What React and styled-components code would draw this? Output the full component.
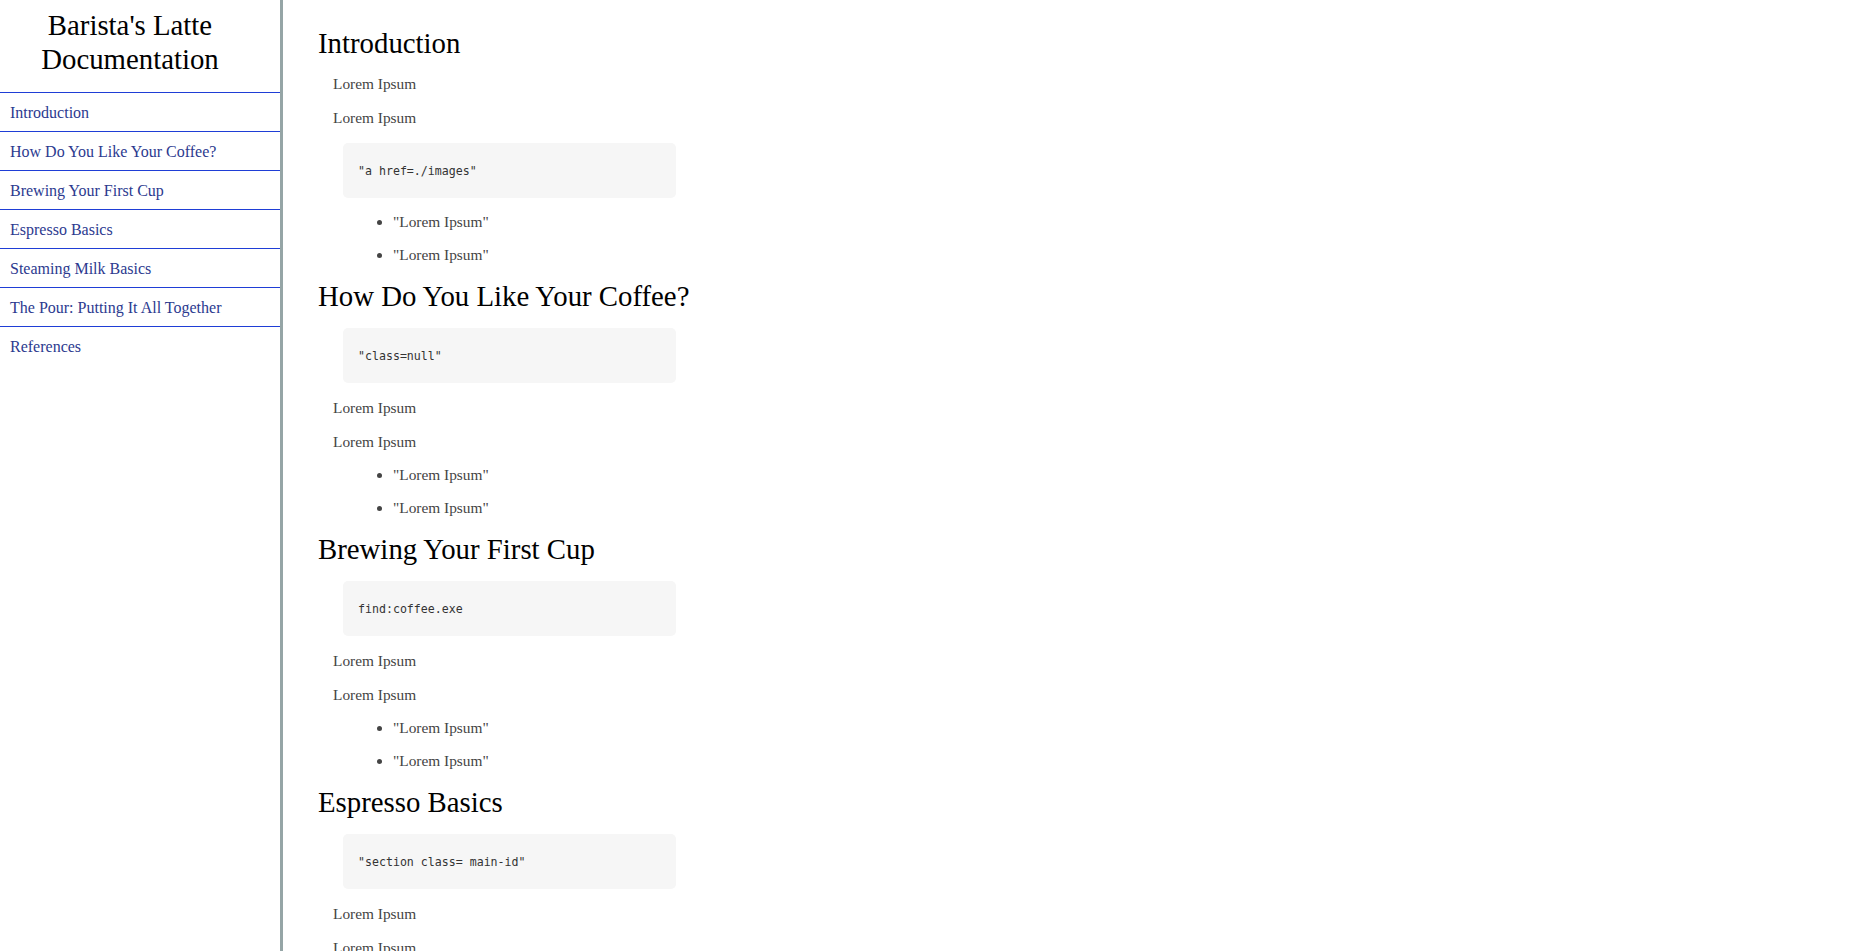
import React from "react";
import styled, { createGlobalStyle } from "styled-components";

const sections = [
    {
        id: "introduction",
        title: "Introduction",
        order: ["p", "p", "code", "list"],
        code: '"a href=./images"',
    },
    {
        id: "how_do_you_like_your_coffee",
        title: "How Do You Like Your Coffee?",
        order: ["code", "p", "p", "list"],
        code: '"class=null"',
    },
    {
        id: "brewing_your_first_cup",
        title: "Brewing Your First Cup",
        order: ["code", "p", "p", "list"],
        code: "find:coffee.exe",
    },
    {
        id: "espresso_basics",
        title: "Espresso Basics",
        order: ["code", "p", "p", "list"],
        code: '"section class= main-id"',
    },
    {
        id: "steaming_milk_basics",
        title: "Steaming Milk Basics",
        order: ["code", "p", "p", "list"],
        code: '"nav id=navbar"',
    },
    {
        id: "the_pour",
        title: "The Pour: Putting It All Together",
        order: ["code", "p", "p", "list"],
        code: '"header"',
    },
    {
        id: "references",
        title: "References",
        order: ["code", "p", "p", "list"],
        code: '"footer"',
    },
];

export default function App() {
    const renderBlock = (kind, section, i) => {
        if (kind === "p") return <Text key={i}>Lorem Ipsum</Text>;
        if (kind === "code")
            return (
                <Code key={i}>
                    <code>{section.code}</code>
                </Code>
            );
        return (
            <List key={i}>
                <li>"Lorem Ipsum"</li>
                <li>"Lorem Ipsum"</li>
            </List>
        );
    };

    return (
        <>
            <GlobalStyle />
            <Page>
                <Navbar id="navbar">
                    <Header>Barista's Latte Documentation</Header>
                    <NavList>
                        {sections.map((s) => (
                            <NavItem key={s.id}>
                                <NavLink href={`#${s.id}`}>{s.title}</NavLink>
                            </NavItem>
                        ))}
                    </NavList>
                </Navbar>
                <Main id="main-doc">
                    {sections.map((s) => (
                        <Section key={s.id} id={s.id}>
                            <SectionTitle>{s.title}</SectionTitle>
                            {s.order.map((kind, i) => renderBlock(kind, s, i))}
                        </Section>
                    ))}
                </Main>
            </Page>
        </>
    );
}

const GlobalStyle = createGlobalStyle`
    * {
        box-sizing: border-box;
    }
    body {
        margin: 0;
        background: #fff;
        font-family: "Liberation Serif", "Times New Roman", serif;
        font-size: 16px;
    }
`;

const Page = styled.div`
    display: flex;
    align-items: flex-start;
`;

const Navbar = styled.nav`
    position: sticky;
    top: 0;
    flex: 0 0 283px;
    height: 100vh;
    border-right: 3px solid #95a5a6;
`;

const Header = styled.header`
    padding: 8px 20px 16px 0;
    text-align: center;
    font-size: 28.8px;
    line-height: 34px;
    color: #000;
`;

const NavList = styled.ul`
    list-style: none;
    margin: 0;
    padding: 0;
`;

const NavItem = styled.li`
    border-top: 1px solid #1f3ed6;
    padding: 11px 10px 9px;
    line-height: 18px;
`;

const NavLink = styled.a`
    color: #2c3a8f;
    text-decoration: none;
    font-size: 16px;
`;

const Main = styled.main`
    flex: 1;
    display: flex;
    flex-direction: column;
    gap: 16px;
    padding: 27px 35px 40px;
`;

const Section = styled.section`
    display: flex;
    flex-direction: column;
    gap: 16px;
`;

const SectionTitle = styled.header`
    font-size: 28.8px;
    line-height: 32px;
    color: #000;
`;

const Text = styled.p`
    margin: 0 0 0 15px;
    font-size: 15.36px;
    line-height: 18px;
    color: #444;
`;

const Code = styled.pre`
    margin: 0 0 0 25px;
    width: 333px;
    padding: 20.5px 15px;
    background: #f6f6f6;
    border-radius: 5px;
    font-family: "DejaVu Sans Mono", "Liberation Mono", monospace;
    font-size: 11.6px;
    line-height: 14px;
    color: #333;
`;

const List = styled.ul`
    display: flex;
    flex-direction: column;
    gap: 15px;
    margin: -1px 0 0;
    padding-left: 75px;
    font-size: 15.36px;
    line-height: 18px;
    color: #444;
`;
